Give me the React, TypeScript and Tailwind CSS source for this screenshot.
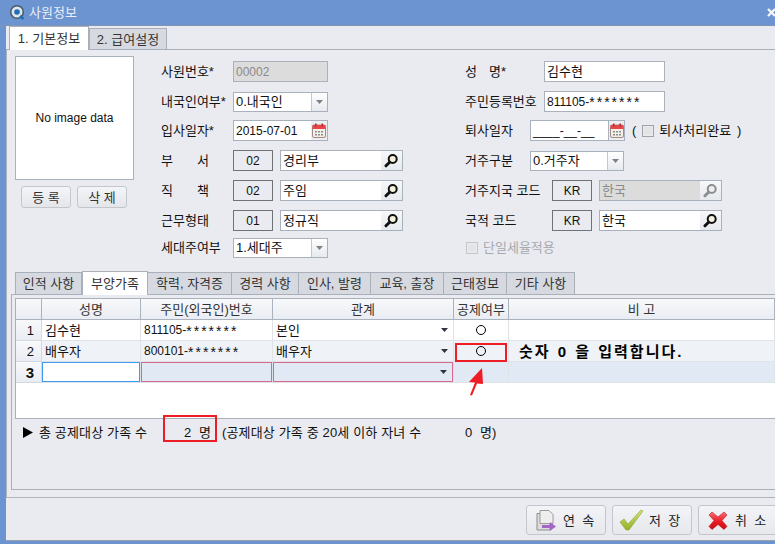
import React from "react";

const FONT = "font-['Liberation_Sans','Noto_Sans_CJK_KR',sans-serif]";

function Mag({ dim }: { dim?: boolean }) {
  const c = dim ? "#8b8f90" : "#111";
  return (
    <svg width="15" height="15" viewBox="0 0 15 15">
      <circle cx="8.7" cy="6" r="4" fill={dim ? "#eceeee" : "#f6f1dc"} stroke={c} strokeWidth="2" />
      <path d="M5.6 9.2 L2 12.8" stroke={c} strokeWidth="3" strokeLinecap="round" />
    </svg>
  );
}

function Calendar() {
  return (
    <svg width="14" height="15" viewBox="0 0 14 15">
      <rect x="0.5" y="2" width="13" height="12.5" rx="1.5" fill="#f2efe9" stroke="#a28b84" />
      <rect x="0.5" y="2" width="13" height="4" fill="#e8474a" />
      <rect x="3" y="0.5" width="1.6" height="3" fill="#b3302f" />
      <rect x="9.4" y="0.5" width="1.6" height="3" fill="#b3302f" />
      <path d="M3 8h2v1.5H3zM6 8h2v1.5H6zM9 8h2v1.5H9zM3 11h2v1.5H3zM6 11h2v1.5H6zM9 11h2v1.5H9z" fill="#8d8d8d" />
    </svg>
  );
}

function Check({ dim }: { dim?: boolean }) {
  return (
    <span className={`w-[12px] h-[12px] border p-[1px] flex ${dim ? "border-[#c4c6c9]" : "border-[#9ea3aa]"}`}>
      <span className={`flex-1 ${dim ? "bg-[#e3e4e6]" : "bg-[#e2e4e6]"}`} />
    </span>
  );
}

function Rrn({ n }: { n: string }) {
  return (
    <span className="text-[12px] flex items-center">
      {n}
      <span className="text-[14px] tracking-[2px] pt-[1px]">*******</span>
    </span>
  );
}

function TextBox({ w, value, disabled }: { w: string; value: React.ReactNode; disabled?: boolean }) {
  return (
    <div className={`${w} h-[21px] border border-[#a9b1bd] flex items-center pl-[2px] ${disabled ? "bg-[#dcdcdc] text-[#8a8a8a]" : "bg-white"}`}>
      {value}
    </div>
  );
}

function Combo({ w, value }: { w: string; value: string }) {
  return (
    <div className={`${w} h-[20px] border border-[#a9b1bd] bg-white flex items-center`}>
      <span className="flex-1 pl-[2px]">{value}</span>
      <span className="w-[16px] h-full border-l border-[#c3c8d0] bg-gradient-to-b from-white to-[#e6e9ee] flex items-center justify-center">
        <svg width="7" height="4" viewBox="0 0 7 4"><path d="M0 0h7L3.5 4z" fill="#7d8288" /></svg>
      </span>
    </div>
  );
}

function DateBox({ w, value, mono }: { w: string; value: React.ReactNode; mono?: boolean }) {
  return (
    <div className={`${w} h-[21px] border border-[#a9b1bd] bg-white flex items-center`}>
      <span className="flex-1 pl-[2px] whitespace-pre text-[12px]">{value}</span>
      <span className={`w-[16px] h-full flex items-center justify-center bg-[#eceef2] ${mono ? "border-l border-[#a9b1bd]" : ""}`}>
        <Calendar />
      </span>
    </div>
  );
}

function Code({ value, w = "w-[40px]" }: { value: string; w?: string }) {
  return <div className={`${w} h-[21px] border border-[#6f7276] flex items-center justify-center bg-[#e9ebf0] text-[12px]`}>{value}</div>;
}

function Lookup({ value, w = "w-[123px]", disabled }: { value: string; w?: string; disabled?: boolean }) {
  return (
    <div className={`${w} h-[21px] border border-[#a9b1bd] flex items-center ${disabled ? "bg-[#dcdcdc] text-[#8a8a8a]" : "bg-white"}`}>
      <span className="flex-1 pl-[2px]">{value}</span>
      <span className="w-[21px] h-full bg-gradient-to-b from-[#f7f8fa] to-[#e6e9ee] flex items-center justify-center">
        <Mag dim={disabled} />
      </span>
    </div>
  );
}

function SpacedLabel({ a, b, w = "w-[48px]" }: { a: string; b: string; w?: string }) {
  return <span className={`${w} flex justify-between`}><span>{a}</span><span>{b}</span></span>;
}

function LRow({ label, children }: { label: React.ReactNode; children: React.ReactNode }) {
  return (
    <div className="flex items-center h-[21px]">
      <div className="w-[72px] shrink-0">{label}</div>
      {children}
    </div>
  );
}

function RRow({ label, w, children }: { label: React.ReactNode; w: string; children?: React.ReactNode }) {
  return (
    <div className="flex items-center h-[21px]">
      <div className={`${w} shrink-0`}>{label}</div>
      {children}
    </div>
  );
}

const subTabs: [string, string, boolean][] = [
  ["인적 사항", "w-[67px]", false],
  ["부양가족", "w-[66px]", true],
  ["학력, 자격증", "w-[84px]", false],
  ["경력 사항", "w-[67px]", false],
  ["인사, 발령", "w-[72px]", false],
  ["교육, 출장", "w-[73px]", false],
  ["근태정보", "w-[63px]", false],
  ["기타 사항", "w-[68px]", false],
];

const COLS = "grid grid-cols-[26px_99px_132px_181px_55px_266px]";

function Head({ children }: { children?: React.ReactNode }) {
  return (
    <div className="h-[21px] border-r border-b border-[#aab2be] bg-gradient-to-b from-[#f8f9fb] to-[#e9ecf2] flex items-center justify-center text-[#333]">
      {children}
    </div>
  );
}

function Num({ children, strong }: { children: React.ReactNode; strong?: boolean }) {
  return (
    <div className={`h-[21px] border-r border-b border-[#d5d9df] bg-gradient-to-b from-[#f8f9fb] to-[#e9ecf2] flex items-center justify-end pr-[7px] ${strong ? "font-bold text-[15px]" : ""}`}>
      {children}
    </div>
  );
}

function Cell({ children, bg }: { children?: React.ReactNode; bg?: string }) {
  return (
    <div className={`h-[21px] border-r border-b border-[#dfe2e7] flex items-center pl-[3px] ${bg ?? "bg-white"}`}>
      {children}
    </div>
  );
}

function Drop() {
  return <svg className="ml-auto mr-[5px]" width="7" height="4" viewBox="0 0 7 4"><path d="M0 0h7L3.5 4z" fill="#2f3540" /></svg>;
}

function Circle() {
  return <div className="w-full flex justify-center -ml-[2px]"><span className="w-[10px] h-[10px] rounded-full border border-black" /></div>;
}

function FootButton({ label, icon }: { label: string; icon: React.ReactNode }) {
  return (
    <div className="w-[80px] h-[30px] shrink-0 border border-[#c3c7cd] rounded-[3px] bg-gradient-to-b from-[#f3f4f7] to-[#e6e8ec] flex items-center pl-[5px]">
      <span className="w-[27px] flex justify-center">{icon}</span>
      <span className="ml-[4px] whitespace-pre text-[#222]">{label}</span>
    </div>
  );
}

export default function App() {
  return (
    <div className={`relative w-[775px] h-[544px] overflow-hidden bg-[#6c94d0] flex flex-col pl-[6px] pb-[3px] text-[13px] leading-none text-[#111] ${FONT}`}>
      <div className="h-[26px] shrink-0 -ml-[6px] flex items-center pl-[9px] text-[#e9eef8] border-b border-[#8094b4]">
        <svg width="17" height="17" viewBox="0 0 17 17">
          <circle cx="8" cy="8" r="6.3" fill="#dfe5ee" stroke="#4c5a6b" strokeWidth="1.6" />
          <circle cx="8" cy="8" r="2.8" fill="#1f6fb5" />
          <path d="M11 12l3.5 3" stroke="#1f6fb5" strokeWidth="2.4" />
        </svg>
        <span className="ml-[3px]">사원정보</span>
        <svg className="ml-auto" width="8" height="9" viewBox="0 0 8 9">
          <path d="M1 1l7 7M8 1L1 8" stroke="#f4f4f4" strokeWidth="2.4" />
        </svg>
      </div>

      <div className="flex-1 flex flex-col bg-[#e9ebf0] border-b border-[#9aa0aa]">
        <div className="h-[24px] shrink-0 flex items-end pl-[3px] border-b border-[#aab0ba] relative">
          <div className="w-[80px] h-[24px] -mb-px bg-white border border-b-0 border-[#aab0ba] flex items-center justify-center text-[#333] z-10">1. 기본정보</div>
          <div className="w-[78px] h-[22px] -mb-px bg-[#d6dae0] border border-[#aab0ba] flex items-center justify-center text-[#333]">2. 급여설정</div>
        </div>

        <div className="h-[448px] shrink-0 border-l border-b border-[#aeb3bc] flex flex-col">
          <div className="h-[221px] shrink-0 flex pl-[8px] pt-[6px]">
            <div className="w-[119px] shrink-0">
              <div className="w-[119px] h-[124px] bg-white border border-[#a9b1bd] flex items-center justify-center text-[12px]">No image data</div>
              <div className="flex gap-[6px] mt-[6px] ml-[6px]">
                {["등 록", "삭 제"].map((t) => (
                  <div key={t} className="w-[50px] h-[22px] border border-[#c3c7cd] rounded-[3px] bg-gradient-to-b from-[#f4f5f8] to-[#e4e6ea] flex items-center justify-center text-[#333]">{t}</div>
                ))}
              </div>
            </div>

            <div className="ml-[27px] mt-[5px] grid grid-cols-[304px_1fr] grid-rows-[30px_29px_30px_30px_30px_27px_21px]">
              <LRow label="사원번호*"><TextBox w="w-[95px]" value={<span className="text-[12px]">00002</span>} disabled /></LRow>
              <RRow label={<span className="flex"><SpacedLabel a="성" b="명" w="w-[36px]" />*</span>} w="w-[79px]"><TextBox w="w-[121px]" value="김수현" /></RRow>

              <LRow label="내국인여부*"><Combo w="w-[95px]" value="0.내국인" /></LRow>
              <RRow label="주민등록번호" w="w-[79px]"><TextBox w="w-[121px]" value={<Rrn n="811105-" />} /></RRow>

              <LRow label="입사일자*"><DateBox w="w-[95px]" value="2015-07-01" /></LRow>
              <RRow label="퇴사일자" w="w-[65px]">
                <DateBox w="w-[95px]" mono value="____-__-__" />
                <span className="ml-[7px]">(</span>
                <span className="ml-[6px]"><Check /></span>
                <span className="ml-[5px]">퇴사처리완료</span>
                <span className="ml-[6px]">)</span>
              </RRow>

              <LRow label={<SpacedLabel a="부" b="서" />}>
                <Code value="02" /><span className="ml-[7px]"><Lookup value="경리부" /></span>
              </LRow>
              <RRow label="거주구분" w="w-[65px]"><Combo w="w-[94px]" value="0.거주자" /></RRow>

              <LRow label={<SpacedLabel a="직" b="책" />}>
                <Code value="02" /><span className="ml-[7px]"><Lookup value="주임" /></span>
              </LRow>
              <RRow label="거주지국 코드" w="w-[87px]">
                <Code value="KR" /><span className="ml-[7px]"><Lookup value="한국" disabled /></span>
              </RRow>

              <LRow label="근무형태">
                <Code value="01" /><span className="ml-[7px]"><Lookup value="정규직" /></span>
              </LRow>
              <RRow label="국적 코드" w="w-[87px]">
                <Code value="KR" /><span className="ml-[7px]"><Lookup value="한국" /></span>
              </RRow>

              <LRow label="세대주여부"><Combo w="w-[95px]" value="1.세대주" /></LRow>
              <div className="flex items-center h-[21px] pl-[1px] text-[#a6a9ae]">
                <Check dim /><span className="ml-[5px]">단일세율적용</span>
              </div>
            </div>
          </div>

          <div className="h-[24px] shrink-0 flex items-end pl-[8px]">
            {subTabs.map(([t, w, active]) => (
              <div
                key={t}
                className={`${w} flex items-center justify-center text-[#333] ${active ? "h-[24px] bg-white border-t border-x border-[#aab0ba] z-10" : "h-[23px] bg-[#d6dae0] border border-[#aab0ba] border-l-0 first:border-l"}`}
              >
                {t}
              </div>
            ))}
          </div>

          <div className="ml-[4px] -mt-px h-[196px] shrink-0 border-l border-t border-b border-[#aab0ba] pt-[3px] pl-[3px] flex flex-col">
            <div className="h-[121px] w-[760px] shrink-0 bg-white border-t border-b border-l border-[#aab0ba] flex flex-col">
              <div className={COLS}>
                <Head /><Head>성명</Head><Head>주민(외국인)번호</Head><Head>관계</Head><Head>공제여부</Head><Head>비  고</Head>
              </div>
              <div className={COLS}>
                <Num>1</Num><Cell>김수현</Cell><Cell><Rrn n="811105-" /></Cell><Cell>본인<Drop /></Cell><Cell><Circle /></Cell><Cell />
              </div>
              <div className={COLS}>
                <Num>2</Num>
                <Cell bg="bg-[#eff2f7]">배우자</Cell>
                <Cell bg="bg-[#eff2f7]"><Rrn n="800101-" /></Cell>
                <Cell bg="bg-[#eff2f7]">배우자<Drop /></Cell>
                <Cell bg="bg-[#eff2f7]"><Circle /></Cell>
                <Cell bg="bg-[#eff2f7]"><span className="ml-[7px] font-bold text-[15px] text-black tracking-[2px] [word-spacing:1px]">숫자 0 을 입력합니다.</span></Cell>
              </div>
              <div className={COLS}>
                <Num strong>3</Num>
                <div className="h-[21px] border-r border-b border-[#dfe2e7]"><div className="h-full border border-[#3d9bf0] bg-white" /></div>
                <div className="h-[21px] border-r border-b border-[#dfe2e7]"><div className="h-full border border-[#d9698f] bg-[#e1e9f4]" /></div>
                <div className="h-[21px] border-r border-b border-[#dfe2e7]"><div className="h-full border border-[#d9698f] bg-[#e1e9f4] flex items-center"><Drop /></div></div>
                <Cell bg="bg-[#e1e9f4]" />
                <Cell bg="bg-[#e1e9f4]" />
              </div>
            </div>
            <div className="h-[26px] shrink-0 flex items-center pl-[8px] whitespace-pre tracking-[0.15px]">
              <svg width="10" height="11" viewBox="0 0 10 11"><path d="M0 0l10 5.5L0 11z" fill="#000" /></svg>
              <span className="ml-[6px] w-[145px]">총 공제대상 가족 수</span>
              <span className="w-[38px]">2  명</span>
              <span className="w-[243px]">(공제대상 가족 중 20세 이하 자녀 수</span>
              <span>0  명)</span>
            </div>
          </div>
        </div>

        <div className="flex-1 flex items-start justify-start pt-[7px] pl-[520px] gap-[6px] overflow-hidden">
          <FootButton label="연  속" icon={
            <svg width="24" height="23" viewBox="0 0 24 23">
              <path d="M3 4.5h9l4 4v12.5H3z" fill="#dcdcdc" stroke="#8d8d8d" />
              <path d="M6 1.5h9l4 4v9H6z" fill="#eeeeee" stroke="#9a9a9a" />
              <path d="M8 16h8v-3l6 4.5-6 4.5v-3H8z" fill="#a565c7" />
            </svg>
          } />
          <FootButton label="저  장" icon={
            <svg width="25" height="22" viewBox="0 0 25 22">
              <defs>
                <linearGradient id="chk" x1="0" y1="0" x2="0" y2="1">
                  <stop offset="0" stopColor="#d3e07a" />
                  <stop offset="1" stopColor="#93b02a" />
                </linearGradient>
              </defs>
              <path d="M1 13l4-3 4 5L22 1l2 1L10 21H7z" fill="url(#chk)" stroke="#8ba62c" strokeWidth="0.6" />
            </svg>
          } />
          <FootButton label="취  소" icon={
            <svg width="20" height="19" viewBox="0 0 20 19">
              <defs>
                <linearGradient id="crs" x1="0" y1="0" x2="0" y2="1">
                  <stop offset="0" stopColor="#f77077" />
                  <stop offset="0.55" stopColor="#ea1b24" />
                  <stop offset="1" stopColor="#c40f18" />
                </linearGradient>
              </defs>
              <path d="M1 4l3-3 6 5 6-5 3 3-5 5.5 5 6-3 3-6-5-6 5-3-3 5-6z" fill="url(#crs)" stroke="#c41018" strokeWidth="0.6" />
            </svg>
          } />
        </div>
      </div>

      {/* annotations */}
      <div className="absolute left-[455px] top-[343px] w-[52px] h-[19px] border-[2px] border-[#ee1c25]" />
      <div className="absolute left-[163px] top-[415px] w-[54px] h-[27px] border-[2px] border-[#ee1c25]" />
      <svg className="absolute left-[465px] top-[365px]" width="22" height="32" viewBox="0 0 22 32">
        <path d="M17 3L4 17l6 .5L5 30l2 .5L12 18.5l6 .5z" fill="#ee1c25" />
      </svg>
    </div>
  );
}
